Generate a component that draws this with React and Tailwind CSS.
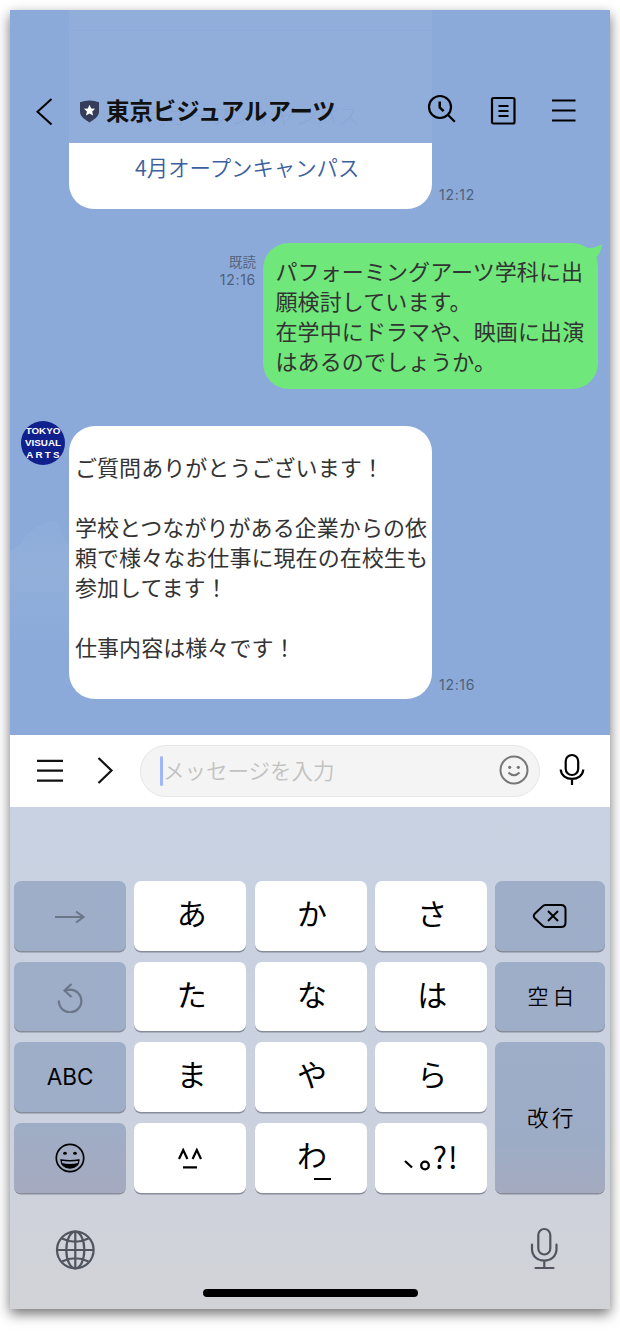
const JP = "font-['Noto_Sans_CJK_JP',sans-serif]";

function Header() {
  return (
    <header className="relative h-[133px] shrink-0">
      <div className="absolute inset-y-0 left-[59px] w-[363px] bg-[#91aedb]">
        <div className="mt-[20px] h-px bg-[#8fa9da]" />
        <p className="absolute left-[66px] top-[90px] whitespace-nowrap text-[21.4px] font-light leading-[30px] text-[#89a7d6]">
          3月オープンキャンパス
        </p>
      </div>
      <div className="relative flex h-full items-end pb-[14px] pl-[24px] pr-[33px]">
        <svg className="mb-[3px] h-[30px] w-[20px] shrink-0" viewBox="0 0 20 30" fill="none" stroke="#000" strokeWidth="2">
          <path d="M17.5 3 3.5 15.7 17.5 28.4" />
        </svg>
        <svg className="mb-[6px] ml-[25px] h-[24px] w-[22px] shrink-0" viewBox="0 0 22 24">
          <path d="M1 3.2Q10.500-.4 20 3.200V12.500C20 18 14 21 10.500 23.500C7 21 1 18 1 12.500Z" fill="#343c59" />
          <path d="m10.500 5.700 1.700 3.700 4 .4-3 2.700.9 4-3.600-2.100-3.500 2.100.9-4-3-2.700 4-.4Z" fill="#fff" />
        </svg>
        <h1 className="mb-px ml-[5px] whitespace-nowrap text-[23.400px] font-bold leading-[36px] text-[#111]">東京ビジュアルアーツ</h1>
        <div className="mb-[2px] ml-auto flex items-center">
          <svg className="mb-[3px] mr-[33px] h-[30px] w-[30px]" viewBox="0 0 30 30" fill="none" stroke="#000" strokeWidth="2.200">
            <circle cx="13" cy="13" r="11" />
            <path d="m20.800 20.800 7 7" />
            <path d="M12.700 7.500v6l4 3.700" strokeWidth="2.500" />
          </svg>
          <svg className="mb-[2px] mr-[33px] h-[30px] w-[28px]" viewBox="0 0 28 30" fill="none" stroke="#000" strokeWidth="2.200">
            <rect x="2" y="3" width="22.500" height="25.500" rx="1.500" />
            <path d="M8.500 11h10M8.500 16h10M8.500 21h10" />
          </svg>
          <svg className="mb-[1px] h-[30px] w-[26px]" viewBox="0 0 26 30" fill="none" stroke="#000" strokeWidth="2.200">
            <path d="M1 5.500h23.500M1 15.500h23.500M1 25.500h23.500" />
          </svg>
        </div>
      </div>
    </header>
  );
}

const TIME = "font-[Inter,sans-serif] text-[14px] leading-[18px] tracking-[0.7px] text-[#4f6079]";

function Chat() {
  return (
    <main className="relative h-[592px] shrink-0">
      <svg className="absolute left-0 top-[370px] h-[140px] w-[60px]" viewBox="0 0 60 140">
        <defs>
          <linearGradient id="cloud" x1="0" y1="0" x2="0" y2="1">
            <stop offset="0" stopColor="#94b1db" stopOpacity=".3" />
            <stop offset=".4" stopColor="#94b1db" stopOpacity=".8" />
            <stop offset="1" stopColor="#94b1db" stopOpacity="0" />
          </linearGradient>
        </defs>
        <path d="M0 38Q10 34 15 24Q28 10 43 7Q51 7 50 18L60 34V130H0Z" fill="url(#cloud)" />
      </svg>
      <div className="relative">
        <div className="flex items-end pl-[59px]">
          <div className="h-[66px] w-[363px] rounded-b-[25px] bg-white pl-[66px] pt-[9px]">
            <p className="whitespace-nowrap text-[21.4px] font-[350] leading-[30px] text-[#3a609f]">4月オープンキャンパス</p>
          </div>
          <span className={`mb-[5px] ml-[7px] ${TIME}`}>12:12</span>
        </div>

        <div className="mt-[34px] flex justify-end pr-[12px]">
          <div className={`mr-[7px] mt-[9px] text-right ${TIME}`}>
            <p className="font-['Noto_Sans_CJK_JP',sans-serif] text-[13.500px] font-[350] tracking-normal">既読</p>
            <p className="pt-px">12:16</p>
          </div>
          <div className="relative h-[146px] w-[335px] rounded-[26px] bg-[#6fe77a] pl-[12.500px] pt-[12px]">
            <svg className="absolute left-[318px] top-0 h-[24px] w-[24px]" viewBox="0 0 24 24">
              <path d="M0 3Q9 8 21.500 1Q19.500 10 15.500 14L17 22 5 14Z" fill="#6fe77a" />
            </svg>
            <p className="relative whitespace-nowrap text-[22px] leading-[30px] tracking-[0.1px] text-[#333]">
              パフォーミングアーツ学科に出<br />願検討しています。<br />在学中にドラマや、映画に出演<br />はあるのでしょうか。
            </p>
          </div>
        </div>

        <div className="mt-[37px] flex pl-[11px]">
          <div className="-mt-[5px] flex h-[44px] w-[44px] flex-col items-center overflow-hidden rounded-full bg-[#10208c] pt-[4px] font-['Liberation_Sans',sans-serif] text-[9.800px] font-bold leading-[12px] text-white">
            <span className="whitespace-nowrap">TOKYO</span>
            <span className="whitespace-nowrap">VISUAL</span>
            <span className="whitespace-nowrap pl-[2px] tracking-[2.200px]">ARTS</span>
          </div>
          <div className="ml-[4px] h-[273px] w-[363px] rounded-[26px] bg-white pl-[6px] pt-[25px]">
            <p className="whitespace-nowrap text-[22px] leading-[30px] tracking-[0.060px] text-[#333]">
              ご質問ありがとうございます！<br /><br />学校とつながりがある企業からの依<br />頼で様々なお仕事に現在の在校生も<br />参加してます！<br /><br />仕事内容は様々です！
            </p>
          </div>
          <span className={`mb-[5px] ml-[7px] self-end ${TIME}`}>12:16</span>
        </div>
      </div>
    </main>
  );
}

function InputBar() {
  return (
    <section className="flex h-[72px] shrink-0 items-center bg-white">
      <svg className="ml-[26px] h-[30px] w-[28px]" viewBox="0 0 28 30" fill="none" stroke="#111" strokeWidth="2.200">
        <path d="M1 4.800h26M1 14.700h26M1 24.700h26" />
      </svg>
      <svg className="ml-[32px] h-[30px] w-[20px]" viewBox="0 0 20 30" fill="none" stroke="#111" strokeWidth="2.200">
        <path d="m2.500 2 13 12.500L2.500 27" />
      </svg>
      <div className="ml-[24px] flex h-[52px] w-[400px] items-center rounded-full border border-[#e6e6e6] bg-[#f4f4f4] pl-[19px] pr-[10px]">
        <span className="h-[30px] w-[3px] rounded-sm bg-[#a0b6fa]" />
        <span className="pb-[3px] text-[21.500px] font-[350] leading-[30px] text-[#c2c2c2]">メッセージを入力</span>
        <svg className="mb-[2px] ml-auto h-[30px] w-[30px]" viewBox="0 0 30 30" fill="none" stroke="#777" strokeWidth="2">
          <circle cx="15" cy="15" r="13.500" />
          <path d="M9.500 17.500Q15 23 20.500 17.500" />
          <circle cx="10.700" cy="12.300" r="1.600" fill="#777" stroke="none" />
          <circle cx="19.300" cy="12.300" r="1.600" fill="#777" stroke="none" />
        </svg>
      </div>
      <svg className="mb-[5px] ml-[19px] h-[34px] w-[26px]" viewBox="0 0 26 34" fill="none" stroke="#000" strokeWidth="2.200">
        <rect x="6.700" y="3" width="12.500" height="20" rx="6.250" />
        <path d="M1.700 17.500C2.500 30 23.500 30 24.300 17.500M13 27v6" />
      </svg>
    </section>
  );
}

const KEY = "flex items-center justify-center rounded-[7px] shadow-[0_1.5px_0_#878d98]";
const KANA = `${KEY} bg-white pb-[8px] pl-[3px] text-[30px] leading-none text-black`;
const GRAY = `${KEY} bg-[#9eadc8] text-black`;

function Keyboard() {
  return (
    <section className="flex grow flex-col bg-linear-to-b from-[#c8d2e2] via-[#cbd1df] via-60% to-[#d2d3d7]">
      <div className="ml-[4px] mt-[74px] grid w-[591px] grid-cols-[112px_112px_112px_112px_110px] grid-rows-[70px_69px_70px_70px] justify-between gap-y-[11px]">
        <div className={GRAY}>
          <svg className="mt-[2px] h-[14px] w-[30px]" viewBox="0 0 30 14" fill="none" stroke="#6b7789" strokeWidth="2">
            <path d="M0 7h28.500M21 1.500 28.500 7 21 12.500" />
          </svg>
        </div>
        <div className={KANA}>あ</div>
        <div className={KANA}>か</div>
        <div className={KANA}>さ</div>
        <div className={GRAY}>
          <svg className="h-[26px] w-[36px]" viewBox="0 0 36 26" fill="none" stroke="#000" strokeWidth="2">
            <path d="M13.500 2H29q4.500 0 4.500 4.500v13Q33.500 24 29 24H13.500Q11.800 24 10.500 22.600L2.500 15Q1 13 2.500 11L10.500 3.400Q11.800 2 13.500 2ZM16 8l10 10M26 8 16 18" />
          </svg>
        </div>

        <div className={GRAY}>
          <svg className="mt-[2px] h-[30px] w-[26px]" viewBox="0 0 26 30" fill="none" stroke="#6b7789" strokeWidth="2.200">
            <path d="M1.800 17.500A11.300 11.300 0 1 0 13.100 6.700L7.500 7.500M14.500 1 7.500 7.500 14.500 14" />
          </svg>
        </div>
        <div className={KANA}>た</div>
        <div className={KANA}>な</div>
        <div className={KANA}>は</div>
        <div className={`${GRAY} pb-[2px] pl-[6px] text-[21px] font-[350] tracking-[4.500px]`}>空白</div>

        <div className={`${GRAY} font-[Inter,sans-serif] text-[22.500px]`}>ABC</div>
        <div className={KANA}>ま</div>
        <div className={KANA}>や</div>
        <div className={KANA}>ら</div>
        <div className={`${KEY} row-span-2 bg-linear-to-b from-[#9eadc8] via-[#9dacc5] via-70% to-[#a5aabf] pb-px pl-[4px] text-[21.500px] font-[350] tracking-[3.500px]`}>改行</div>

        <div className={`${KEY} bg-linear-to-b from-[#9eadc6] to-[#a5aabf]`}>
          <svg className="h-[30px] w-[30px]" viewBox="0 0 30 30" fill="none" stroke="#000" strokeWidth="1.700">
            <circle cx="15" cy="15" r="13.700" />
            <ellipse cx="10" cy="10.300" rx="1.900" ry="1.500" fill="#000" stroke="none" />
            <ellipse cx="20" cy="10.300" rx="1.900" ry="1.500" fill="#000" stroke="none" />
            <path d="M6 17Q15 18.500 24 17Q23.500 25 15 25T6 17Z" strokeWidth="1.300" />
            <path d="M7 20Q15 22 23 20Q21 25 15 25T7 20Z" fill="#000" stroke="none" />
          </svg>
        </div>
        <div className={`${KEY} flex-col bg-white font-[Inter,sans-serif] text-black`}>
          <svg className="h-[21px] w-[26px]" viewBox="0 0 26 21" fill="none" stroke="#000" strokeWidth="2.200">
            <path d="m2 11 4.200-9 4.200 9M15.600 11l4.200-9 4.200 9M6 19.300h14" />
          </svg>
        </div>
        <div className={`${KANA} relative`}>
          わ<span className="absolute left-[59px] top-[55px] h-[2px] w-[17px] bg-black" />
        </div>
        <div className={`${KEY} gap-[2px] bg-white text-black`}>
          <svg className="mt-[13px] h-[12px] w-[28px]" viewBox="0 0 28 12" fill="none" stroke="#000" strokeWidth="2.300">
            <path d="m2 2 7 6.500" />
            <circle cx="22" cy="6.500" r="3.800" />
          </svg>
          <span className="pb-[5px] text-[30px] leading-none tracking-[1px]">?!</span>
        </div>
      </div>

      <div className="mt-[34px] flex justify-between pl-[45px] pr-[51px] text-[#50555f]">
        <svg className="mt-[3px] h-[40px] w-[40px]" viewBox="0 0 40 40" fill="none" stroke="currentColor" strokeWidth="2.200">
          <circle cx="20.300" cy="20" r="18.300" />
          <ellipse cx="20.300" cy="20" rx="9" ry="18.300" />
          <path d="M20.300 1.700v36.600M2 20h36.600M7 8.500Q20.300 15 33.500 8.500M7 31.500Q20.300 25 33.500 31.500" />
        </svg>
        <svg className="h-[44px] w-[30px]" viewBox="0 0 30 44" fill="none" stroke="currentColor" strokeWidth="2.200" strokeLinecap="round">
          <rect x="9.300" y="2" width="12" height="25.500" rx="6" />
          <path d="M3 17.500V22C3 37.500 27.500 37.500 27.500 22v-4.500M15.300 34v7M6.500 41h18" />
        </svg>
      </div>
      <div className="mb-[12px] mt-auto h-[8px] w-[215px] self-center rounded-full bg-black" />
    </section>
  );
}

export default function App() {
  return (
    <div className={`h-[1340px] w-[620px] overflow-hidden bg-white p-[10px] ${JP}`}>
      <div className="flex h-[1299px] w-[600px] flex-col bg-[#8caad9] shadow-[0_5px_12px_rgba(0,0,0,0.55)]">
        <Header />
        <Chat />
        <InputBar />
        <Keyboard />
      </div>
    </div>
  );
}
